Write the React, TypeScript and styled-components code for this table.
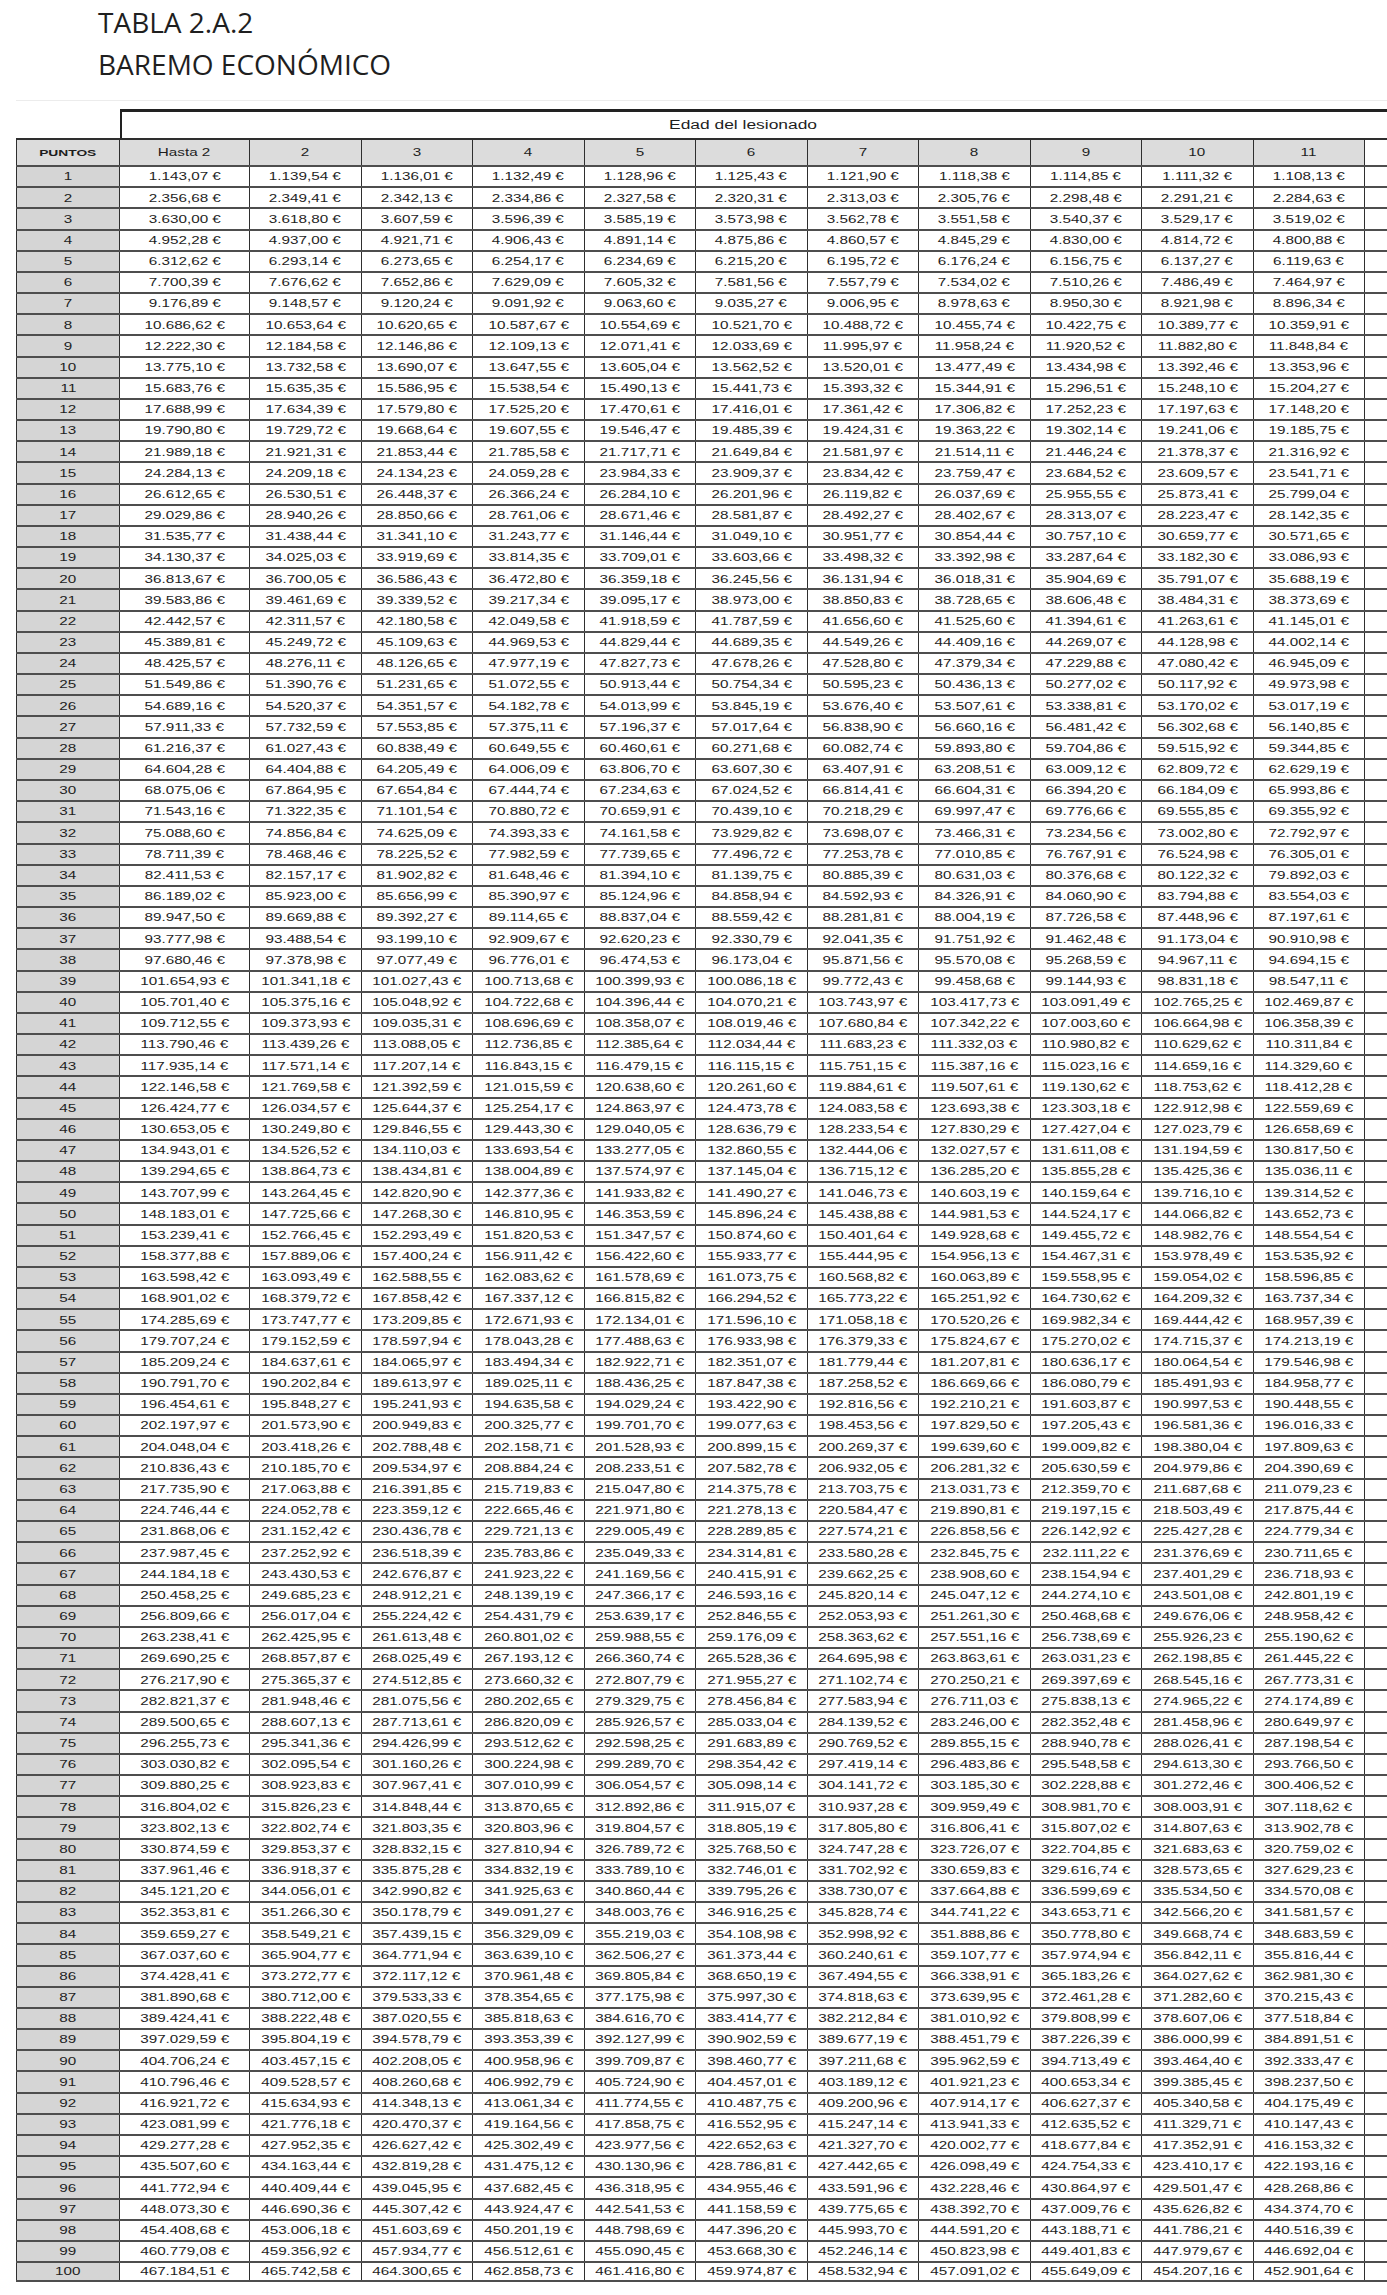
import React from 'react';
import styled, { createGlobalStyle } from 'styled-components';

// [hasta 2, edad 10, edad 11] -> ages 2..9 are linear between the first two
const ROWS: [number, number, number][] = [
  [1143.07, 1111.32, 1108.13],
  [2356.68, 2291.21, 2284.63],
  [3630.0, 3529.17, 3519.02],
  [4952.28, 4814.72, 4800.88],
  [6312.62, 6137.27, 6119.63],
  [7700.39, 7486.49, 7464.97],
  [9176.89, 8921.98, 8896.34],
  [10686.62, 10389.77, 10359.91],
  [12222.3, 11882.8, 11848.84],
  [13775.1, 13392.46, 13353.96],
  [15683.76, 15248.1, 15204.27],
  [17688.99, 17197.63, 17148.2],
  [19790.8, 19241.06, 19185.75],
  [21989.18, 21378.37, 21316.92],
  [24284.13, 23609.57, 23541.71],
  [26612.65, 25873.41, 25799.04],
  [29029.86, 28223.47, 28142.35],
  [31535.77, 30659.77, 30571.65],
  [34130.37, 33182.3, 33086.93],
  [36813.67, 35791.07, 35688.19],
  [39583.86, 38484.31, 38373.69],
  [42442.57, 41263.61, 41145.01],
  [45389.81, 44128.98, 44002.14],
  [48425.57, 47080.42, 46945.09],
  [51549.86, 50117.92, 49973.98],
  [54689.16, 53170.02, 53017.19],
  [57911.33, 56302.68, 56140.85],
  [61216.37, 59515.92, 59344.85],
  [64604.28, 62809.72, 62629.19],
  [68075.06, 66184.09, 65993.86],
  [71543.16, 69555.85, 69355.92],
  [75088.6, 73002.8, 72792.97],
  [78711.39, 76524.98, 76305.01],
  [82411.53, 80122.32, 79892.03],
  [86189.02, 83794.88, 83554.03],
  [89947.5, 87448.96, 87197.61],
  [93777.98, 91173.04, 90910.98],
  [97680.46, 94967.11, 94694.15],
  [101654.93, 98831.18, 98547.11],
  [105701.4, 102765.25, 102469.87],
  [109712.55, 106664.98, 106358.39],
  [113790.46, 110629.62, 110311.84],
  [117935.14, 114659.16, 114329.6],
  [122146.58, 118753.62, 118412.28],
  [126424.77, 122912.98, 122559.69],
  [130653.05, 127023.79, 126658.69],
  [134943.01, 131194.59, 130817.5],
  [139294.65, 135425.36, 135036.11],
  [143707.99, 139716.1, 139314.52],
  [148183.01, 144066.82, 143652.73],
  [153239.41, 148982.76, 148554.54],
  [158377.88, 153978.49, 153535.92],
  [163598.42, 159054.02, 158596.85],
  [168901.02, 164209.32, 163737.34],
  [174285.69, 169444.42, 168957.39],
  [179707.24, 174715.37, 174213.19],
  [185209.24, 180064.54, 179546.98],
  [190791.7, 185491.93, 184958.77],
  [196454.61, 190997.53, 190448.55],
  [202197.97, 196581.36, 196016.33],
  [204048.04, 198380.04, 197809.63],
  [210836.43, 204979.86, 204390.69],
  [217735.9, 211687.68, 211079.23],
  [224746.44, 218503.49, 217875.44],
  [231868.06, 225427.28, 224779.34],
  [237987.45, 231376.69, 230711.65],
  [244184.18, 237401.29, 236718.93],
  [250458.25, 243501.08, 242801.19],
  [256809.66, 249676.06, 248958.42],
  [263238.41, 255926.23, 255190.62],
  [269690.25, 262198.85, 261445.22],
  [276217.9, 268545.16, 267773.31],
  [282821.37, 274965.22, 274174.89],
  [289500.65, 281458.96, 280649.97],
  [296255.73, 288026.41, 287198.54],
  [303030.82, 294613.3, 293766.5],
  [309880.25, 301272.46, 300406.52],
  [316804.02, 308003.91, 307118.62],
  [323802.13, 314807.63, 313902.78],
  [330874.59, 321683.63, 320759.02],
  [337961.46, 328573.65, 327629.23],
  [345121.2, 335534.5, 334570.08],
  [352353.81, 342566.2, 341581.57],
  [359659.27, 349668.74, 348683.59],
  [367037.6, 356842.11, 355816.44],
  [374428.41, 364027.62, 362981.3],
  [381890.68, 371282.6, 370215.43],
  [389424.41, 378607.06, 377518.84],
  [397029.59, 386000.99, 384891.51],
  [404706.24, 393464.4, 392333.47],
  [410796.46, 399385.45, 398237.5],
  [416921.72, 405340.58, 404175.49],
  [423081.99, 411329.71, 410147.43],
  [429277.28, 417352.91, 416153.32],
  [435507.6, 423410.17, 422193.16],
  [441772.94, 429501.47, 428268.86],
  [448073.3, 435626.82, 434374.7],
  [454408.68, 441786.21, 440516.39],
  [460779.08, 447979.67, 446692.04],
  [467184.51, 454207.16, 452901.64],
];

const AGES = ['Hasta 2', '2', '3', '4', '5', '6', '7', '8', '9', '10', '11'];

function euro(v: number) {
  const [int, dec] = v.toFixed(2).split('.');
  return int.replace(/\B(?=(\d{3})+(?!\d))/g, '.') + ',' + dec + ' €';
}

function expand([first, tenth, eleventh]: [number, number, number]) {
  const out: number[] = [];
  for (let k = 0; k < 10; k++) out.push(first - ((first - tenth) * k) / 9);
  out.push(eleventh);
  return out;
}

const GlobalStyle = createGlobalStyle`
  body {
    margin: 0;
    background: #ffffff;
  }
`;

const Page = styled.div`
  width: 1387px;
  padding-top: 1px;
`;

const Title = styled.h1`
  margin: 0 0 0 98px;
  font-family: 'Open Sans', 'Liberation Sans', sans-serif;
  font-size: 28px;
  line-height: 42px;
  font-weight: 400;
  color: #1f1f1f;
`;

const Table = styled.div`
  margin: 15px 0 0 16px;
  padding-top: 8px;
  border-top: 1px solid #ececec;
`;

const COLS = '104px 130px repeat(10, 111.5px)';

const EdadRow = styled.div`
  box-sizing: border-box;
  width: 1267px;
  height: 29px;
  margin-left: 104px;
  padding-right: 22px;
  border-top: 3px solid #222222;
  border-left: 2px solid #222222;
  display: flex;
  align-items: center;
  justify-content: center;
`;

const Row = styled.div<{ $head?: boolean; $last?: boolean }>`
  display: grid;
  grid-template-columns: ${COLS};
  box-sizing: border-box;
  height: ${(p) => (p.$head ? '27px' : '21.18px')};
  border-top: 2px solid ${(p) => (p.$head ? '#2e2e2e' : '#4e4e4e')};
  border-bottom: ${(p) => (p.$last ? '2px solid #4e4e4e' : 'none')};
`;

const Cell = styled.div<{ $shade?: boolean; $first?: boolean }>`
  display: flex;
  align-items: center;
  justify-content: center;
  overflow: hidden;
  border-right: 1.5px solid #2f2f2f;
  border-left: ${(p) => (p.$first ? '1.5px solid #2f2f2f' : 'none')};
  background: ${(p) => (p.$shade ? '#d5d5d5' : '#ffffff')};
`;

const HeadCell = styled(Cell)`
  background: #dcdcdc;
`;

const Text = styled.span<{ $bold?: boolean; $size?: number }>`
  display: inline-block;
  font-family: 'Liberation Sans', Arial, sans-serif;
  font-size: ${(p) => p.$size ?? 10.5}px;
  font-weight: ${(p) => (p.$bold ? 700 : 400)};
  color: #1e1e1e;
  white-space: nowrap;
  transform: scaleX(1.45);
  line-height: 1;
`;

export default function App() {
  return (
    <Page>
      <GlobalStyle />
      <Title>
        TABLA 2.A.2
        <br />
        BAREMO ECONÓMICO
      </Title>
      <Table>
        <EdadRow>
          <Text $size={12}>Edad del lesionado</Text>
        </EdadRow>
        <Row $head>
          <HeadCell $first>
            <Text $bold $size={9.5}>
              PUNTOS
            </Text>
          </HeadCell>
          {AGES.map((age) => (
            <HeadCell key={age}>
              <Text>{age}</Text>
            </HeadCell>
          ))}
        </Row>
        {ROWS.map((row, i) => (
          <Row key={i} $last={i === ROWS.length - 1}>
            <Cell $first $shade>
              <Text>{i + 1}</Text>
            </Cell>
            {expand(row).map((v, k) => (
              <Cell key={k}>
                <Text>{euro(v)}</Text>
              </Cell>
            ))}
          </Row>
        ))}
      </Table>
    </Page>
  );
}
